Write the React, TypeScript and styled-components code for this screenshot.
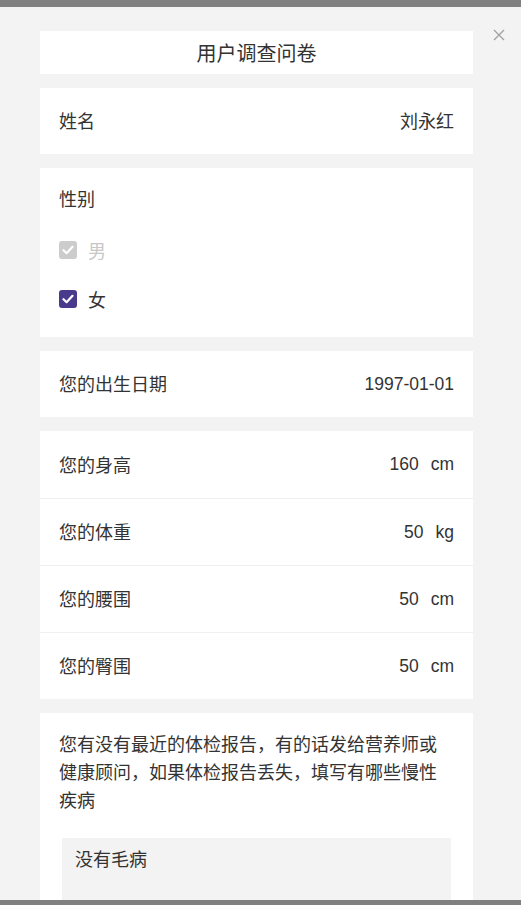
import React from "react";
import styled, { createGlobalStyle } from "styled-components";

const GlobalStyle = createGlobalStyle`
  html, body {
    margin: 0;
    padding: 0;
    background: #808080;
    font-family: "Liberation Sans", "Noto Sans CJK SC", sans-serif;
    color: #333333;
  }
  * { box-sizing: border-box; }
`;

const Overlay = styled.div`
  height: 905px;
  padding-top: 7px;
  overflow: hidden;
`;

const Modal = styled.div`
  position: relative;
  height: 893px;
  background: #f3f3f3;
  overflow: hidden;
`;

const CloseButton = styled.button`
  position: absolute;
  top: 22px;
  right: 16px;
  width: 12px;
  height: 12px;
  padding: 0;
  border: none;
  background: transparent;
  display: flex;
  cursor: pointer;
`;

const Content = styled.div`
  display: flex;
  flex-direction: column;
  gap: 14px;
  padding: 24px 48px 0 40px;
`;

const TitleCard = styled.div`
  height: 43px;
  background: #ffffff;
  display: flex;
  align-items: center;
  justify-content: center;
  font-size: 20px;
  color: #333333;
`;

const Card = styled.div`
  background: #ffffff;
`;

const Row = styled.div<{ $h?: number }>`
  height: ${(p) => p.$h ?? 67}px;
  display: flex;
  align-items: center;
  justify-content: space-between;
  padding: 0 19px;
  font-size: 18px;
  & + & {
    border-top: 1px solid #f0f0f0;
  }
`;

const Label = styled.span`
  color: #333333;
  margin-top: -2px;
`;

const Value = styled.span`
  color: #333333;
  font-size: 17.5px;
`;

const CjkValue = styled.span`
  color: #333333;
  font-size: 18px;
  margin-top: -2px;
`;

const Unit = styled.span`
  margin-left: 12px;
`;

const GenderCard = styled.div`
  background: #ffffff;
  padding: 18px 19px 18px;
`;

const FieldTitle = styled.div`
  font-size: 18px;
  line-height: 28px;
`;

const Options = styled.div`
  display: flex;
  flex-direction: column;
  gap: 9px;
  margin-top: 16px;
`;

const Option = styled.label<{ $disabled?: boolean }>`
  height: 40px;
  display: flex;
  align-items: center;
  gap: 11px;
  font-size: 18px;
  color: ${(p) => (p.$disabled ? "#c8c8c8" : "#333333")};
`;

const Box = styled.span<{ $color: string }>`
  width: 18px;
  height: 18px;
  border-radius: 3px;
  background: ${(p) => p.$color};
  display: flex;
  align-items: center;
  justify-content: center;
`;

const QuestionCard = styled.div`
  background: #ffffff;
  padding: 18px 19px 0;
  height: 200px;
`;

const Question = styled.div`
  font-size: 18px;
  line-height: 28px;
  color: #333333;
`;

const AnswerBox = styled.div`
  margin: 23px 3px 0;
  background: #f3f3f3;
  min-height: 120px;
  padding: 8px 13px;
  font-size: 18px;
  line-height: 28px;
  color: #333333;
`;

const Check = () => (
  <svg width="12" height="10" viewBox="0 0 12 10">
    <path d="M1.5 5.2 L4.6 8.2 L10.5 1.8" fill="none" stroke="#ffffff" strokeWidth="2.2" strokeLinecap="round" strokeLinejoin="round" />
  </svg>
);

const measures = [
  { label: "您的身高", value: "160", unit: "cm" },
  { label: "您的体重", value: "50", unit: "kg" },
  { label: "您的腰围", value: "50", unit: "cm" },
  { label: "您的臀围", value: "50", unit: "cm" },
];

export default function App() {
  return (
    <>
      <GlobalStyle />
      <Overlay>
        <Modal>
          <CloseButton aria-label="关闭">
            <svg width="12" height="12" viewBox="0 0 12 12">
              <path d="M1 1 L11 11 M11 1 L1 11" stroke="#a0a0a0" strokeWidth="1.3" />
            </svg>
          </CloseButton>
          <Content>
            <TitleCard>用户调查问卷</TitleCard>
            <Card>
              <Row $h={66}>
                <Label>姓名</Label>
                <CjkValue>刘永红</CjkValue>
              </Row>
            </Card>
            <GenderCard>
              <FieldTitle>性别</FieldTitle>
              <Options>
                <Option $disabled>
                  <Box $color="#cccccc">
                    <Check />
                  </Box>
                  男
                </Option>
                <Option>
                  <Box $color="#4a3a8c">
                    <Check />
                  </Box>
                  女
                </Option>
              </Options>
            </GenderCard>
            <Card>
              <Row $h={66}>
                <Label>您的出生日期</Label>
                <Value>1997-01-01</Value>
              </Row>
            </Card>
            <Card>
              {measures.map((m) => (
                <Row key={m.label}>
                  <Label>{m.label}</Label>
                  <Value>
                    {m.value}
                    <Unit>{m.unit}</Unit>
                  </Value>
                </Row>
              ))}
            </Card>
            <QuestionCard>
              <Question>
                您有没有最近的体检报告，有的话发给营养师或健康顾问，如果体检报告丢失，填写有哪些慢性疾病
              </Question>
              <AnswerBox>没有毛病</AnswerBox>
            </QuestionCard>
          </Content>
        </Modal>
      </Overlay>
    </>
  );
}
